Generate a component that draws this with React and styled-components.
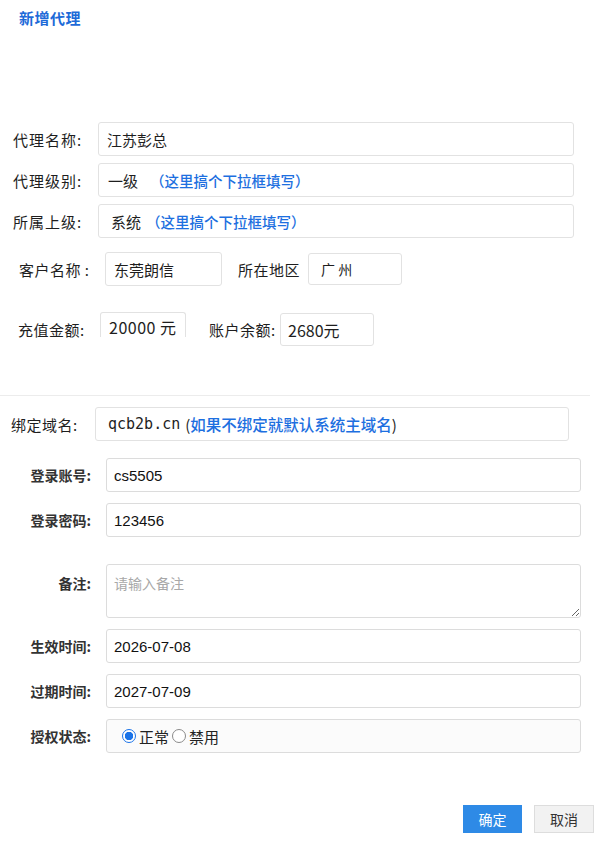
import styled, { createGlobalStyle } from "styled-components";

const GlobalStyle = createGlobalStyle`
    body {
        margin: 0;
        background: #ffffff;
        font-family: "Noto Sans CJK SC", "Noto Sans", sans-serif;
        font-size: 14px;
        color: #222222;
    }
`

const Page = styled.div`
    width: 599px;
    height: 845px;
    position: relative;
    overflow: hidden;
`

const Title = styled.h1`
    margin: 0;
    padding: 9px 0 0 19px;
    height: 24px;
    font-size: 15px;
    font-weight: bold;
    letter-spacing: 0.5px;
    line-height: 18px;
    color: #1d6ad8;
`

const TopSection = styled.div`
    display: flex;
    flex-direction: column;
    row-gap: 7px;
    margin-top: 89px;
`

const Row = styled.div`
    display: flex;
    align-items: center;
`

const TopLabel = styled.span`
    width: 85px;
    padding-left: 13px;
    font-size: 15px;
    color: #1e1e1e;
    letter-spacing: 1px;
`

const Box = styled.div`
    display: flex;
    align-items: center;
    box-sizing: border-box;
    width: ${(p) => p.$w}px;
    height: ${(p) => p.$h || 34}px;
    padding-left: ${(p) => p.$pad || 8}px;
    border: 1px solid #e2e2e2;
    border-radius: 3px;
    background: ${(p) => p.$bg || "#ffffff"};
    white-space: nowrap;
    font-size: ${(p) => p.$fs || 15}px;
    color: #1e1e1e;
`

const Hint = styled.span`
    color: #1d6fe0;
    font-weight: 500;
    font-size: ${(p) => p.$fs || 14.5}px;
    margin-left: ${(p) => p.$ml || 0}px;
`

const Pair = styled.div`
    display: flex;
    align-items: ${(p) => p.$align || "center"};
    margin-top: ${(p) => p.$mt}px;
`

const PairLabel = styled.span`
    margin-left: ${(p) => p.$ml}px;
    width: ${(p) => p.$w}px;
    font-size: 15px;
    letter-spacing: 0.5px;
    color: #1e1e1e;
    align-self: center;
`

const ClippedBox = styled(Box)`
    align-items: flex-end;
    border-bottom: none;
    border-radius: 3px 3px 0 0;
    padding-bottom: 1px;
    font-size: 16px;
    line-height: 18px;
    letter-spacing: 0.5px;
`

const BalanceBox = styled(Box)`
    margin-top: 1px;
    font-size: 16px;
`

const Divider = styled.div`
    height: 1px;
    background: #ececec;
    width: 590px;
    margin-top: 49px;
`

const DomainRow = styled(Row)`
    margin-top: 11px;
`

const DomainLabel = styled.span`
    width: 84px;
    padding-left: 11px;
    font-size: 15px;
    letter-spacing: 0.5px;
    color: #1e1e1e;
`

const Mono = styled.span`
    font-family: "DejaVu Sans Mono", "Liberation Mono", monospace;
    font-size: 15px;
    margin-right: 5px;
`

const Form = styled.div`
    display: grid;
    grid-template-columns: 91px 475px;
    column-gap: 15px;
    row-gap: 11px;
    margin-top: 17px;
    align-items: center;
`

const FormLabel = styled.span`
    justify-self: end;
    align-self: ${(p) => (p.$top ? "start" : "center")};
    padding-top: ${(p) => (p.$top ? 9 : 0)}px;
    font-weight: bold;
    color: #333333;
    font-size: 14px;
`

const Value = styled(Box)`
    font-family: "Liberation Sans", Arial, sans-serif;
    padding-left: ${(p) => p.$pad || 7}px;
    border-color: #dcdcdc;
    color: #111111;
`

const Note = styled.textarea`
    box-sizing: border-box;
    width: 475px;
    height: 54px;
    margin-top: 16px;
    padding: 8px 7px;
    border: 1px solid #dcdcdc;
    border-radius: 3px;
    font-family: "Noto Sans CJK SC", sans-serif;
    font-size: 14px;
    resize: vertical;
    outline: none;

    &::placeholder {
        color: #a8a8a8;
    }
`

const NoteLabel = styled(FormLabel)`
    margin-top: 16px;
`

const Radio = styled.span`
    display: inline-block;
    box-sizing: border-box;
    width: 14px;
    height: 14px;
    border-radius: 50%;
    border: 1px solid ${(p) => (p.$on ? "#1a73e8" : "#8a8a8a")};
    background: ${(p) => (p.$on ? "radial-gradient(circle, #1a73e8 0 4px, #ffffff 4.5px)" : "#ffffff")};
    margin-right: 3px;
`

const RadioText = styled.span`
    font-family: "Noto Sans CJK SC", sans-serif;
    font-size: 15px;
    margin-right: 3px;
    color: #222222;
`

const Footer = styled.div`
    display: flex;
    justify-content: flex-end;
    column-gap: 12px;
    margin-top: 52px;
    padding-right: 5px;
`

const Button = styled.button`
    width: ${(p) => p.$w}px;
    height: 28px;
    border: 1px solid ${(p) => (p.$primary ? "#2e8ae6" : "#dddddd")};
    background: ${(p) => (p.$primary ? "#2e8ae6" : "#f2f2f2")};
    color: ${(p) => (p.$primary ? "#ffffff" : "#333333")};
    font-family: "Noto Sans CJK SC", sans-serif;
    font-size: 14px;
    padding: 0;
`

const App = () => {
    return (
        <Page>
            <GlobalStyle />
            <Title>新增代理</Title>

            <TopSection>
                <Row>
                    <TopLabel>代理名称:</TopLabel>
                    <Box $w={476}>江苏彭总</Box>
                </Row>
                <Row>
                    <TopLabel>代理级别:</TopLabel>
                    <Box $w={476} $pad={9}>
                        一级<Hint $ml={12}>（这里搞个下拉框填写）</Hint>
                    </Box>
                </Row>
                <Row>
                    <TopLabel>所属上级:</TopLabel>
                    <Box $w={476} $pad={12}>
                        系统<Hint $ml={5}>（这里搞个下拉框填写）</Hint>
                    </Box>
                </Row>
            </TopSection>

            <Pair $mt={14}>
                <PairLabel $ml={19} $w={86}>客户名称 :</PairLabel>
                <Box $w={117}>东莞朗信</Box>
                <PairLabel $ml={16} $w={70}>所在地区</PairLabel>
                <Box $w={94} $h={32} $pad={12} $fs={14}>广 州</Box>
            </Pair>

            <Pair $mt={26} $align="flex-start">
                <PairLabel $ml={18} $w={82}>充值金额:</PairLabel>
                <ClippedBox $w={86} $h={25}>20000 元</ClippedBox>
                <PairLabel $ml={23} $w={71}>账户余额:</PairLabel>
                <BalanceBox $w={94} $h={33} $pad={7}>2680元</BalanceBox>
            </Pair>

            <Divider />

            <DomainRow>
                <DomainLabel>绑定域名:</DomainLabel>
                <Box $w={474} $pad={12}>
                    <Mono>qcb2b.cn</Mono>(<Hint $fs={15.5}>如果不绑定就默认系统主域名</Hint>)
                </Box>
            </DomainRow>

            <Form>
                <FormLabel>登录账号:</FormLabel>
                <Value $w={475}>cs5505</Value>

                <FormLabel>登录密码:</FormLabel>
                <Value $w={475}>123456</Value>

                <NoteLabel $top>备注:</NoteLabel>
                <Note placeholder="请输入备注" />

                <FormLabel>生效时间:</FormLabel>
                <Value $w={475}>2026-07-08</Value>

                <FormLabel>过期时间:</FormLabel>
                <Value $w={475}>2027-07-09</Value>

                <FormLabel>授权状态:</FormLabel>
                <Value $w={475} $bg="#fbfbfb" $pad={15}>
                    <Radio $on />
                    <RadioText>正常</RadioText>
                    <Radio />
                    <RadioText>禁用</RadioText>
                </Value>
            </Form>

            <Footer>
                <Button $primary $w={59}>确定</Button>
                <Button $w={60}>取消</Button>
            </Footer>
        </Page>
    );
}

export default App;
